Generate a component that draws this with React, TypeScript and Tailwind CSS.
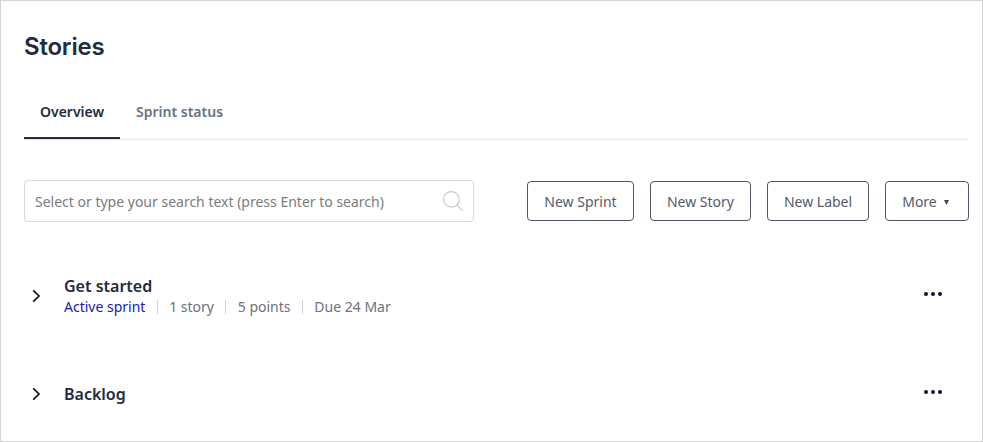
import React from "react";

const tabs = [
  { label: "Overview", active: true },
  { label: "Sprint status", active: false },
];

function Chevron() {
  return (
    <svg className="block h-4 w-4 shrink-0" viewBox="0 0 16 16" fill="none" stroke="#14151c" strokeWidth="1.7">
      <path d="M5.2 2.4 L11 8 L5.2 13.6" />
    </svg>
  );
}

function Dots() {
  return (
    <button className="block h-4 w-5 shrink-0" aria-label="Options">
      <svg className="block h-4 w-5" viewBox="0 0 20 16" fill="#0f1530">
        <circle cx="3" cy="8" r="2.05" />
        <circle cx="10" cy="8" r="2.05" />
        <circle cx="17" cy="8" r="2.05" />
      </svg>
    </button>
  );
}

function ActionButton({ width, children }: { width: string; children: React.ReactNode }) {
  return (
    <button
      className={`flex h-10 items-center justify-center rounded-[4px] border border-[#4f5666] pt-[2px] text-[14px] leading-5 whitespace-nowrap text-[#545b6a] ${width}`}
    >
      {children}
    </button>
  );
}

function Divider() {
  return <span className="mr-[11.4px] ml-[11.4px] h-[14px] w-px bg-[#c4d6e4]" />;
}

export default function App() {
  return (
    <main className="h-[442px] w-[983px] overflow-hidden border border-[#d4d4d4] bg-white pr-[13px] pl-[23px] font-['Noto_Sans',sans-serif] text-[#222b40]">
      <h1 className="mt-[30px] h-8 font-[Inter,sans-serif] text-[24px] leading-8 font-semibold tracking-[-0.2px]">Stories</h1>

      <nav className="mt-[23px] flex h-[54px] border-b border-[#e5e6e8]">
        {tabs.map((t) => (
          <div
            key={t.label}
            className={
              t.active
                ? "flex h-[53px] w-24 justify-center border-b-2 border-[#222b40] pt-[16px] text-[14px] leading-5 font-semibold"
                : "flex h-[53px] justify-center px-4 pt-[16px] text-[14px] leading-5 font-semibold text-[#6b7280]"
            }
          >
            {t.label}
          </div>
        ))}
      </nav>

      <div className="mt-10 flex items-center justify-between">
        <label className="flex h-[42px] w-[450px] items-center justify-between rounded-[4px] border border-[#d9dadb] pr-[9px] pl-[10px]">
          <input
            className="w-[380px] pt-[2px] text-[14px] leading-5 outline-none placeholder:text-[#7c7c7c] placeholder:opacity-100"
            placeholder="Select or type your search text (press Enter to search)"
          />
          <svg className="block h-[22px] w-[22px]" viewBox="0 0 22 22" fill="none" stroke="#cacaca" strokeWidth="1.2">
            <circle cx="9.4" cy="9.4" r="7.8" />
            <path d="M14.9 14.9 L20.8 20.8" />
          </svg>
        </label>
        <div className="flex gap-4">
          <ActionButton width="w-[107px]">New Sprint</ActionButton>
          <ActionButton width="w-[101px]">New Story</ActionButton>
          <ActionButton width="w-[102px]">New Label</ActionButton>
          <ActionButton width="w-[84px] pr-[3px]">
            More
            <svg className="ml-[7px] h-[5px] w-[5px]" viewBox="0 0 5 5" fill="#3f4656">
              <path d="M0 0 H5 L2.5 5 Z" />
            </svg>
          </ActionButton>
        </div>
      </div>

      <section className="mt-[53px] flex h-[44px] pr-[26px] pl-1">
        <div className="pt-[13px]">
          <Chevron />
        </div>
        <div className="ml-5 flex-1">
          <h2 className="text-[16px] leading-[22px] font-semibold">Get started</h2>
          <div className="flex h-5 items-center text-[14px] leading-5 text-[#6b7280]">
            <a className="text-[#1420b8]">Active sprint</a>
            <Divider />
            <span>1 story</span>
            <Divider />
            <span>5 points</span>
            <Divider />
            <span>Due 24 Mar</span>
          </div>
        </div>
        <div className="pt-[11px]">
          <Dots />
        </div>
      </section>

      <section className="mt-[64px] flex h-[22px] pr-[26px] pl-1">
        <div className="pt-[3px]">
          <Chevron />
        </div>
        <h2 className="ml-5 flex-1 text-[16px] leading-[22px] font-semibold">Backlog</h2>
        <div className="pt-px">
          <Dots />
        </div>
      </section>
    </main>
  );
}
